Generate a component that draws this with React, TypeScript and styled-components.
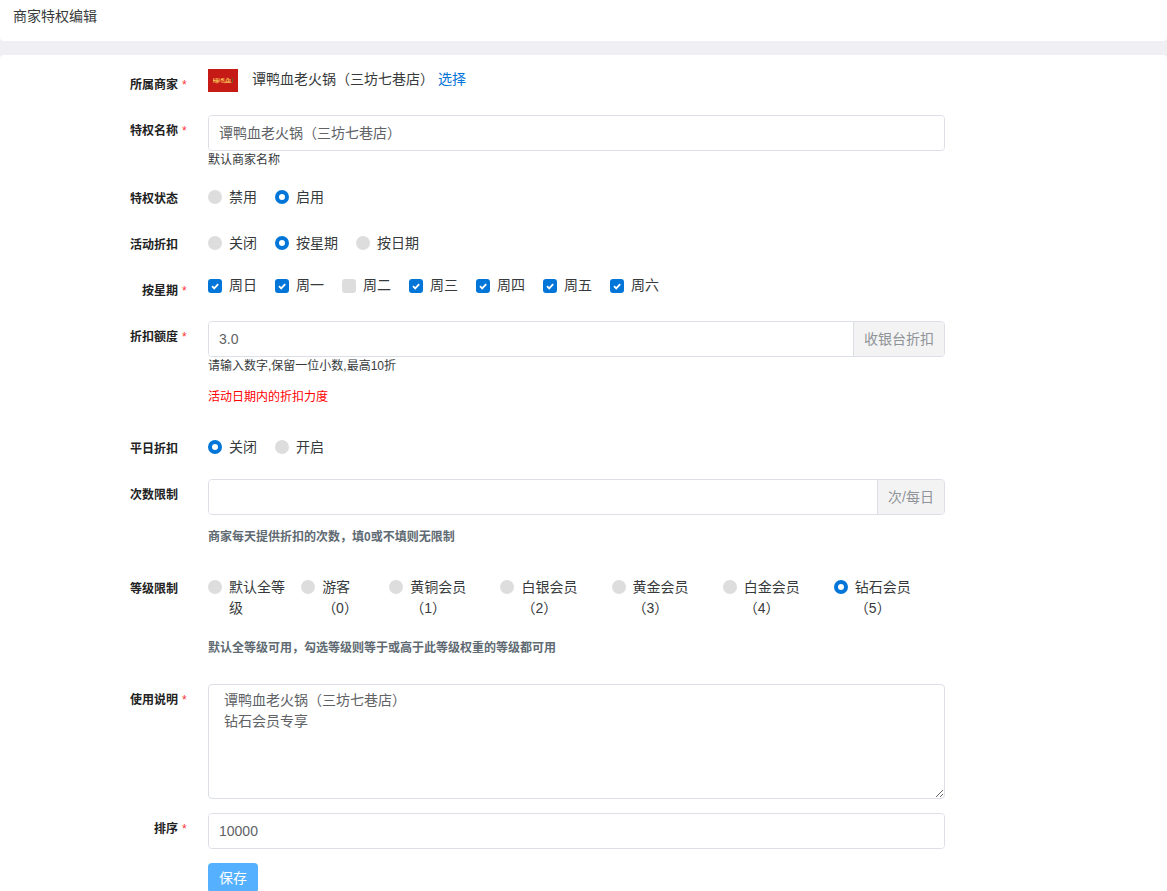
import React from 'react';
import styled, { createGlobalStyle } from 'styled-components';

const GlobalStyle = createGlobalStyle`
  * { box-sizing: border-box; }
  body {
    margin: 0;
    background: #fff;
    color: #373a3c;
    font-family: "Liberation Sans", "Noto Sans CJK SC", sans-serif;
    font-size: 14px;
    line-height: 21px;
    text-spacing-trim: space-all;
  }
  input, textarea, button { font: inherit; margin: 0; }
`;

const Page = styled.div`
  background: #efeff4;
  display: flex;
  flex-direction: column;
  gap: 14px;
`;

const Header = styled.header`
  background: #fff;
  border-radius: 0 0 4px 4px;
  padding: 6px 13px 14px;
`;

const Title = styled.h1`
  margin: 0;
  font-size: 14px;
  font-weight: 400;
  line-height: 21px;
`;

const Form = styled.form`
  background: #fff;
  border-radius: 4px 4px 0 0;
  padding-top: 14px;
  display: flex;
  flex-direction: column;
  gap: 14px;
`;

const Row = styled.div`
  display: grid;
  grid-template-columns: 208px minmax(0, 1fr) 222px;
  min-height: 32px;
`;

const RowLabel = styled.label`
  display: flex;
  justify-content: flex-end;
  align-self: start;
  padding-top: 7px;
  color: #222;
  font-size: 12px;
  font-weight: 700;
  line-height: 18px;
`;

const Mark = styled.span`
  width: 30px;
  padding-left: 4px;
  color: #f33;
  font-weight: 400;
`;

const Content = styled.div`
  grid-column: 2;
`;

const Merchant = styled.div`
  display: flex;
  align-items: flex-start;
`;

const MerchantName = styled.span`
  margin-left: 14px;
`;

const Link = styled.a`
  margin-left: 4px;
  color: #0275d8;
  text-decoration: none;
`;

const Group = styled.div`
  display: flex;
  border: 1px solid #dcdfe6;
  border-radius: 4px;
  height: 36px;
  overflow: hidden;
`;

const TextInput = styled.input`
  flex: 1;
  min-width: 0;
  border: 0;
  outline: 0;
  padding: 0 10px;
  color: #606266;
  background: #fff;
`;

const Addon = styled.span`
  display: flex;
  align-items: center;
  border-left: 1px solid #dcdfe6;
  padding: 0 10px;
  color: #909399;
  background: #f3f3f3;
`;

const TextArea = styled.textarea`
  display: block;
  width: 100%;
  height: 115px;
  padding: 5px 15px;
  border: 1px solid #dcdfe6;
  border-radius: 4px;
  outline: 0;
  color: #606266;
  line-height: 21px;
  resize: vertical;
`;

const Help = styled.div<{ $warn?: boolean }>`
  margin-top: ${p => (p.$warn ? '13px' : '0')};
  padding-bottom: ${p => (p.$warn ? '13px' : '0')};
  color: ${p => (p.$warn ? '#f00' : '#373a3c')};
  font-size: 12px;
  line-height: 18px;
`;

const Note = styled.p`
  margin: 13px 0;
  color: #606a72;
  font-size: 12px;
  font-weight: 700;
  line-height: 18px;
`;

const Options = styled.div<{ $top?: boolean }>`
  display: flex;
  gap: 18px;
  padding-top: ${p => (p.$top ? '0' : '4px')};
`;

const Levels = styled.div`
  display: grid;
  grid-template-columns: 93fr 88fr repeat(5, 111fr);
  padding: 4px 0 7px;
`;

const Option = styled.label<{ $level?: boolean }>`
  display: flex;
  align-items: flex-start;
  gap: 7px;
  padding-right: ${p => (p.$level ? '15px' : '0')};
`;

const Radio = styled.input`
  appearance: none;
  flex: none;
  width: 14px;
  height: 14px;
  margin-top: 3px;
  border-radius: 50%;
  background: #ddd;
  &:checked { border: 4px solid #0275d8; background: #fff; }
`;

const CheckBox = styled.span`
  display: grid;
  flex: none;
  margin-top: 4px;
  > * { grid-area: 1 / 1; }
`;

const CheckInput = styled.input`
  appearance: none;
  width: 14px;
  height: 14px;
  border-radius: 3px;
  background: #ddd;
  &:checked { background: #0275d8; }
  & + svg { visibility: hidden; pointer-events: none; }
  &:checked + svg { visibility: visible; }
`;

const SaveButton = styled.button`
  display: block;
  height: 30px;
  padding: 0 11px;
  border: 0;
  border-radius: 4px;
  color: #fff;
  background: #55b1ff;
`;

function Field({ id, label, required, children }: {
  id?: string; label: string; required?: boolean; children: React.ReactNode;
}) {
  return (
    <Row>
      <RowLabel htmlFor={id} as={id ? 'label' : 'span'}>
        {label}<Mark>{required ? '*' : ''}</Mark>
      </RowLabel>
      <Content role={id ? undefined : 'group'} aria-label={id ? undefined : label}>{children}</Content>
    </Row>
  );
}

function Radios({ name, items, value }: { name: string; items: string[]; value: string }) {
  return (
    <Options>
      {items.map(t => (
        <Option key={t}>
          <Radio type="radio" name={name} defaultChecked={t === value} />
          <span>{t}</span>
        </Option>
      ))}
    </Options>
  );
}

function Logo() {
  return (
    <svg width="30" height="23" viewBox="0 0 30 23" aria-hidden="true">
      <rect width="30" height="23" fill="#c61a17" />
      <g fill="none" stroke="#e88a3c" strokeWidth="1.2">
        <path d="M5 10.500h1.500M5.800 9v5M7.500 9.500h3M7.500 11.200h3v2h-3zM9 9v5.500" />
        <path d="M11.800 9.500v3.500M13.300 9.500h2.500v2h-2.500M13 13.200h4l-.5 1" />
        <path d="M19.500 8.800l-2 4.700h6M19.500 10.500h2.500v3M20.500 9v4.500" />
      </g>
      <g fill="#f2c95c">
        <path d="M5 11h2v1H5zM8 11.500h2v1H8zM13 10h2v1h-2zM18 12.500h4v1h-4z" />
      </g>
      <path d="M24.500 9v5" stroke="#6f5b2a" strokeWidth="1" />
    </svg>
  );
}

const days = ['周日', '周一', '周二', '周三', '周四', '周五', '周六'];
const levels = ['默认全等级', '游客（0）', '黄铜会员（1）', '白银会员（2）', '黄金会员（3）', '白金会员（4）', '钻石会员（5）'];

export default function App() {
  return (
    <>
      <GlobalStyle />
      <Page>
        <Header><Title>商家特权编辑</Title></Header>
        <Form onSubmit={e => e.preventDefault()}>
          <Field label="所属商家" required>
            <Merchant>
              <Logo />
              <MerchantName>谭鸭血老火锅（三坊七巷店）</MerchantName>
              <Link href="#">选择</Link>
            </Merchant>
          </Field>
          <Field id="name" label="特权名称" required>
            <Group><TextInput id="name" defaultValue="谭鸭血老火锅（三坊七巷店）" /></Group>
            <Help>默认商家名称</Help>
          </Field>
          <Field label="特权状态">
            <Radios name="status" items={['禁用', '启用']} value="启用" />
          </Field>
          <Field label="活动折扣">
            <Radios name="activity" items={['关闭', '按星期', '按日期']} value="按星期" />
          </Field>
          <Field label="按星期" required>
            <Options $top>
              {days.map(d => (
                <Option key={d}>
                  <CheckBox>
                    <CheckInput type="checkbox" defaultChecked={d !== '周二'} />
                    <svg width="14" height="14" viewBox="0 0 14 14" fill="none" stroke="#fff" strokeWidth="1.800">
                      <path d="M4 7.200l2.200 2.200L10.200 5.200" />
                    </svg>
                  </CheckBox>
                  <span>{d}</span>
                </Option>
              ))}
            </Options>
          </Field>
          <Field id="discount" label="折扣额度" required>
            <Group>
              <TextInput id="discount" defaultValue="3.0" />
              <Addon>收银台折扣</Addon>
            </Group>
            <Help>请输入数字,保留一位小数,最高10折</Help>
            <Help $warn>活动日期内的折扣力度</Help>
          </Field>
          <Field label="平日折扣">
            <Radios name="weekday" items={['关闭', '开启']} value="关闭" />
          </Field>
          <Field id="limit" label="次数限制">
            <Group>
              <TextInput id="limit" />
              <Addon>次/每日</Addon>
            </Group>
            <Note>商家每天提供折扣的次数，填0或不填则无限制</Note>
          </Field>
          <Field label="等级限制">
            <Levels>
              {levels.map((l, i) => (
                <Option key={l} $level>
                  <Radio type="radio" name="level" defaultChecked={i === levels.length - 1} />
                  <span>{l}</span>
                </Option>
              ))}
            </Levels>
            <Note>默认全等级可用，勾选等级则等于或高于此等级权重的等级都可用</Note>
          </Field>
          <Field id="desc" label="使用说明" required>
            <TextArea id="desc" defaultValue={'谭鸭血老火锅（三坊七巷店）\n钻石会员专享'} />
          </Field>
          <Field id="sort" label="排序" required>
            <Group><TextInput id="sort" defaultValue="10000" /></Group>
          </Field>
          <Row>
            <Content><SaveButton type="submit">保存</SaveButton></Content>
          </Row>
        </Form>
      </Page>
    </>
  );
}
